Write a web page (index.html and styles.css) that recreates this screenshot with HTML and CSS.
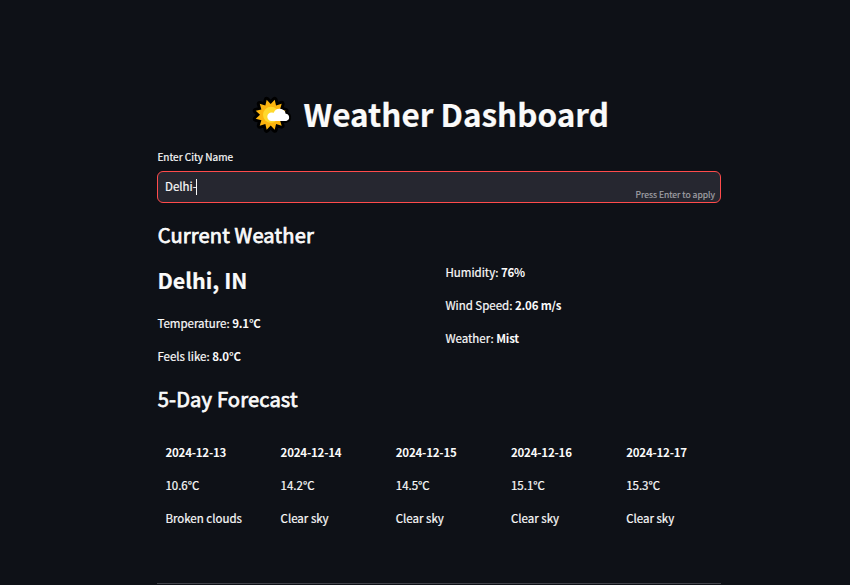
FILE: index.html
```html
<!DOCTYPE html>
<html lang="en">
<head>
<meta charset="utf-8">
<title>Weather Dashboard</title>
<link rel="stylesheet" href="styles.css">
</head>
<body>
<main class="page">
  <h1 class="title">
    <svg class="sun" viewBox="0 0 40 40" aria-hidden="true">
      <defs>
        <path id="rays" transform="translate(18.700 19.800) scale(1.070)" d="M0-10L3.750-14 5-8.700 10.250-10.250 8.700-5 14-3.750 10 0 14 3.750 8.700 5 10.250 10.250 5 8.700 3.750 14 0 10-3.750 14-5 8.700-10.250 10.250-8.700 5-14 3.750-10 0-14-3.750-8.700-5-10.250-10.250-5-8.700-3.750-14z"/>
        <path id="cloud" d="M19.500 25.900a4.200 4.200 0 0 1 0-8.400q1 0 2.200.3a6.300 6.300 0 0 1 12 .9a3.650 3.650 0 0 1 .6 7.200z"/>
      </defs>
      <use href="#rays" class="rays-outline"/>
      <use href="#cloud" class="cloud-outline"/>
      <use href="#rays" fill="#fcb50f"/>
      <circle cx="19" cy="19.800" r="8" fill="#ffd92c"/>
      <use href="#cloud" fill="#fff"/>
    </svg>
    <span class="title-text">Weather Dashboard</span>
  </h1>
  <label class="label">Enter City Name</label>
  <div class="field"><span class="value">Delhi-</span><span class="caret"></span><span class="hint">Press Enter to apply</span></div>
  <h2 class="heading">Current Weather</h2>
  <section class="current">
    <div class="place">
      <h2 class="city">Delhi, IN</h2>
      <p>Temperature: <strong>9.1°C</strong></p>
      <p>Feels like: <strong>8.0°C</strong></p>
    </div>
    <div class="details">
      <p>Humidity: <strong>76%</strong></p>
      <p>Wind Speed: <strong>2.06 m/s</strong></p>
      <p>Weather: <strong>Mist</strong></p>
    </div>
  </section>
  <h2 class="heading forecast-heading">5-Day Forecast</h2>
  <section class="forecast">
    <div><p><strong>2024-12-13</strong></p><p>10.6°C</p><p>Broken clouds</p></div>
    <div><p><strong>2024-12-14</strong></p><p>14.2°C</p><p>Clear sky</p></div>
    <div><p><strong>2024-12-15</strong></p><p>14.5°C</p><p>Clear sky</p></div>
    <div><p><strong>2024-12-16</strong></p><p>15.1°C</p><p>Clear sky</p></div>
    <div><p><strong>2024-12-17</strong></p><p>15.3°C</p><p>Clear sky</p></div>
  </section>
  <hr class="rule">
</main>
</body>
</html>
```
FILE: styles.css
```css
* { box-sizing: border-box; margin: 0; padding: 0; }
html, body { height: 585px; overflow: hidden; }
body {
  background: #0e1117;
  color: #fafafa;
  font-family: "Noto Sans CJK SC", "Noto Sans", sans-serif;
  font-size: 11.5px;
  line-height: 20px;
  -webkit-text-stroke: 0.2px currentColor;
}
.page { width: 564px; margin-left: 157px; padding-top: 93px; }
.title {
  display: flex;
  align-items: center;
  height: 42px;
  padding-left: 95px;
  gap: 11.500px;
  font-size: 31.45px;
  line-height: 42px;
  white-space: nowrap;
}
.sun { width: 40px; height: 40px; flex: none; margin-top: 2px; overflow: visible; }
.rays-outline { fill: #000; stroke: #000; stroke-width: 5.500; stroke-linejoin: round; }
.cloud-outline { fill: #000; stroke: #000; stroke-width: 4; stroke-linejoin: round; }
.title-text { margin-top: -1px; }
.label { display: block; margin-top: 14px; padding-left: .4px; font-size: 10.05px; line-height: 16px; }
.field {
  position: relative;
  display: flex;
  align-items: center;
  height: 32px;
  margin-top: 6px;
  padding-left: 7px;
  background: #262730;
  border: 1px solid #ff4b4b;
  border-radius: 6px;
}
.value { margin: -2px -1px 0 0; }
.caret { width: 1px; height: 16px; background: #fafafa; margin-top: -1px; }
.hint { position: absolute; right: 5px; bottom: 2px; font-size: 8.6px; line-height: 12px; color: #a0a0a5; }
.heading {
  margin-top: 18px;
  padding-left: .7px;
  font-size: 20.1px;
  font-weight: 400;
  line-height: 27px;
  letter-spacing: .16px;
  -webkit-text-stroke: .75px currentColor;
}
.current { display: grid; grid-template-columns: 276px 276px; gap: 12px; margin-top: 14px; padding-left: .4px; }
.city { margin-bottom: 17px; font-size: 21.5px; line-height: 32px; margin-top: 2px; }
p { height: 20px; margin-bottom: 13px; white-space: nowrap; }
strong { letter-spacing: -.2px; -webkit-text-stroke: 0; }
.forecast-heading { margin-top: 6px; }
.forecast { display: grid; grid-template-columns: repeat(5, 102.400px); gap: 12.800px; padding: 30px 0 0 8.400px; }
.rule { margin-top: 42px; border: 0; border-top: 1px solid #41434a; }
```
